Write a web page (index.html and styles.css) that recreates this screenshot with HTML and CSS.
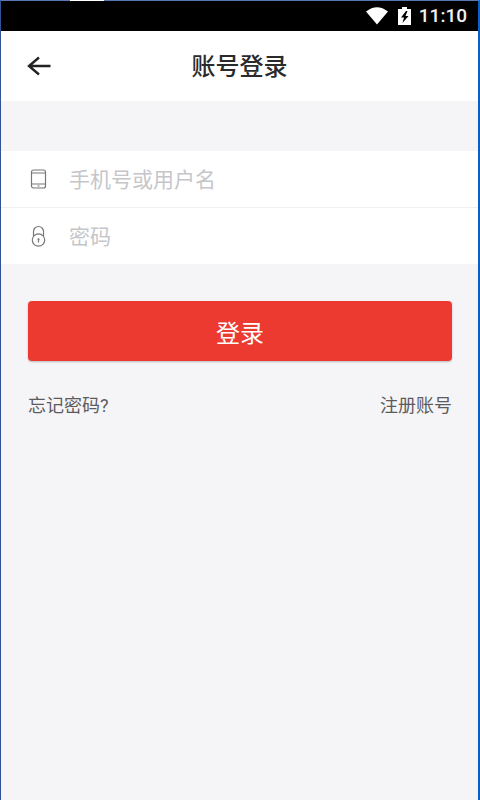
FILE: index.html
```html
<!DOCTYPE html>
<html lang="zh-CN">
<head>
<meta charset="utf-8">
<meta name="viewport" content="width=device-width, initial-scale=1">
<title>账号登录</title>
<link rel="stylesheet" href="styles.css">
</head>
<body>
<div class="window">
  <div class="status">
    <svg class="status-wifi" viewBox="0 0 22 18" aria-hidden="true"><path d="M0 4.500Q11-4 22 4.500L11 17.500Z"/></svg>
    <svg class="status-battery" viewBox="0 0 13 18" aria-hidden="true"><path fill-rule="evenodd" d="M4 0h5v2h4v16H0V2h4ZM8 4 3 10.500h3L4.500 16 10.500 9H7.500L9.500 4Z"/></svg>
    <time class="clock">11:10</time>
  </div>
  <header class="header">
    <button class="back" type="button" aria-label="返回">
      <svg viewBox="0 0 24 20" aria-hidden="true"><path d="M12 1.500 2 10l10 8.500M2 10h21.500"/></svg>
    </button>
    <h1 class="title">账号登录</h1>
  </header>
  <main>
    <form class="form">
      <div class="fields">
        <div class="field">
          <label for="account" aria-label="手机号或用户名">
            <svg class="field-icon" viewBox="0 0 18 22" aria-hidden="true"><rect x="1.500" y="2" width="14" height="18" rx="2"/><path d="M1.500 5h14M1.500 16h14M7.500 18h2"/></svg>
          </label>
          <input id="account" type="text" placeholder="手机号或用户名">
        </div>
        <div class="field">
          <label for="password" aria-label="密码">
            <svg class="field-icon" viewBox="0 0 18 22" aria-hidden="true"><path d="M3.500 11V6.500a5 5 0 0 1 10 0V11"/><circle cx="8.500" cy="15" r="6.200"/><path d="M8.500 14.500v3"/><circle cx="8.500" cy="14.300" r=".5"/></svg>
          </label>
          <input id="password" type="password" placeholder="密码">
        </div>
      </div>
      <button class="submit" type="submit">登录</button>
    </form>
    <nav class="links">
      <a href="#forgot">忘记密码?</a>
      <a href="#register">注册账号</a>
    </nav>
  </main>
</div>
</body>
</html>
```
FILE: styles.css
```css
* {
  box-sizing: border-box;
}

body {
  margin: 0;
  background: #f5f4f7;
  color: #2b2b2b;
  font-family: Roboto, "Noto Sans CJK SC", sans-serif;
}

.window {
  position: relative;
  min-height: 100vh;
  border: solid;
  border-width: 1px 2px 0 1px;
  border-color: #5578b2 #0b60c6 #2f5597 #2f5597;
}

/* Light notch in the window's top edge */
.window::before {
  content: "";
  position: absolute;
  top: -1px;
  left: 69px;
  width: 34px;
  height: 1px;
  background: #fff;
}

.status {
  display: flex;
  align-items: center;
  justify-content: flex-end;
  height: 30px;
  padding-right: 11px;
  background: #000;
  color: #f2f2f2;
}

.status svg {
  height: 18px;
  fill: #fff;
}

.status-wifi {
  width: 22px;
  margin-right: 10px;
}

.status-battery {
  width: 13px;
  margin-right: 8px;
}

.clock {
  font-size: 19px;
  font-weight: 500;
  line-height: 32px;
}

.header {
  display: grid;
  grid-template-columns: 76px 1fr 76px;
  align-items: center;
  height: 70px;
  background: #fff;
}

.back {
  display: flex;
  align-items: center;
  height: 48px;
  padding: 0 0 0 26px;
  border: 0;
  background: none;
}

.back svg {
  width: 24px;
  height: 20px;
  fill: none;
  stroke: #222;
  stroke-width: 2.400;
}

.title {
  margin: 0;
  padding-top: 2px;
  font-size: 24px;
  font-weight: 500;
  line-height: 36px;
  text-align: center;
}

.fields {
  margin-top: 50px;
  background: #fff;
}

.field {
  display: flex;
  align-items: center;
  height: 56px;
  padding: 0 27px 0 29px;
}

.field + .field {
  height: 57px;
  border-top: 1px solid #efeff1;
}

.field label {
  display: flex;
  margin-right: 21px;
}

.field-icon {
  width: 18px;
  height: 22px;
  fill: none;
  stroke: #77777b;
  stroke-width: 1.200;
}

.field input {
  flex: 1;
  min-width: 0;
  height: 40px;
  padding: 2px 0 0;
  border: 0;
  outline: 0;
  background: none;
  color: #333;
  font-family: inherit;
  font-size: 21px;
}

.field input::placeholder {
  color: #c6c6ca;
}

.submit {
  display: block;
  width: calc(100% - 53px);
  height: 60px;
  margin: 37px 26px 0 27px;
  padding: 0;
  border: 0;
  border-radius: 4px;
  background: #ec3a31;
  box-shadow: 0 1px 2px #00000040;
  color: #fff;
  font-family: inherit;
  font-size: 24px;
}

.links {
  display: flex;
  justify-content: space-between;
  margin: 32px 26px 0 27px;
  font-size: 18px;
  line-height: 26px;
}

.links a {
  color: #5c5c5e;
  text-decoration: none;
}
```
